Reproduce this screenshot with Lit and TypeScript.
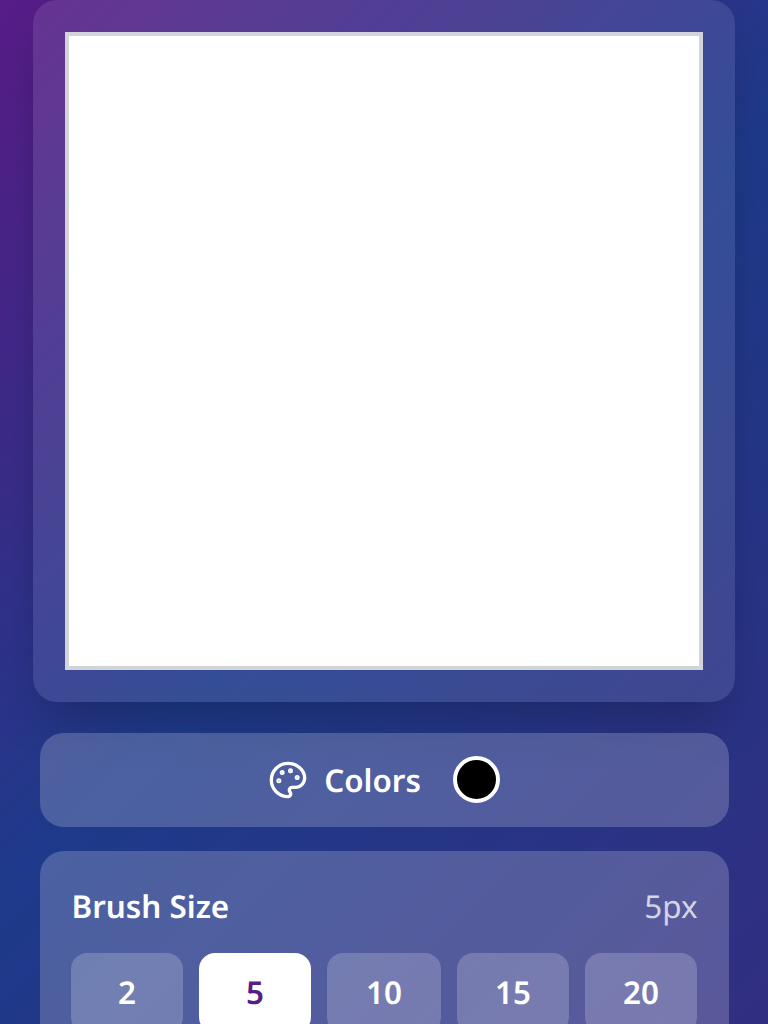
import { LitElement, html, css } from "lit";
import { customElement } from "lit/decorators.js";

@customElement("app-root")
export class AppRoot extends LitElement {
  static styles = css`
    :host {
      display: block;
      height: 1024px;
      overflow: hidden;
      font-family: "Noto Sans", sans-serif;
      text-rendering: geometricPrecision;
      color: #fff;
      background: linear-gradient(135deg, #581c87 0%, #1e3a8a 50%, #312e81 100%);
    }
    .page {
      display: flex;
      flex-direction: column;
      align-items: center;
    }
    .stage {
      box-sizing: border-box;
      width: 702px;
      height: 702px;
      margin-top: -0.5px;
      padding: 32px;
      border-radius: 24px;
      background: rgba(255, 255, 255, 0.1);
      box-shadow: 0 25px 50px -12px rgba(0, 0, 0, 0.25);
    }
    .canvas {
      box-sizing: border-box;
      width: 638px;
      height: 638px;
      background: #fff;
      border: 4px solid #d1d5db;
    }
    .colors {
      box-sizing: border-box;
      width: 689px;
      height: 94px;
      margin-top: 31px;
      border-radius: 24px;
      background: rgba(255, 255, 255, 0.2);
      display: flex;
      align-items: center;
      justify-content: center;
    }
    .colors svg {
      width: 40px;
      height: 40px;
      margin-right: 16px;
      fill: none;
      stroke: #fff;
      stroke-width: 2;
      stroke-linecap: round;
      stroke-linejoin: round;
    }
    .colors span {
      font-size: 31.4px;
      line-height: 45px;
      font-weight: 600;
      margin: 2px 32px 0 0;
    }
    .swatch {
      box-sizing: border-box;
      width: 47px;
      height: 47px;
      border-radius: 50%;
      background: #000;
      border: 4px solid #fff;
    }
    .brush {
      box-sizing: border-box;
      width: 689px;
      margin-top: 24px;
      padding: 32px 32px 32px 31px;
      border-radius: 24px;
      background: rgba(255, 255, 255, 0.2);
    }
    .head {
      display: flex;
      justify-content: space-between;
      align-items: center;
      margin: 0 -1px 24px 1px;
      padding-top: 1px;
      line-height: 45px;
    }
    .title {
      font-size: 31.4px;
      font-weight: 600;
    }
    .value {
      font-size: 31.4px;
      color: rgba(255, 255, 255, 0.75);
    }
    .sizes {
      display: grid;
      grid-template-columns: 112px 112px 114px 112px 112px;
      gap: 16px;
    }
    .sizes button {
      height: 80px;
      border: none;
      border-radius: 16px;
      background: rgba(255, 255, 255, 0.2);
      color: #fff;
      font: 600 31.4px "Noto Sans", sans-serif;
      text-rendering: geometricPrecision;
      padding: 0 0 0 1px;
    }
    .sizes button.on {
      background: #fff;
      color: #581c87;
    }
  `;

  render() {
    return html`
      <div class="page">
        <div class="stage"><div class="canvas"></div></div>
        <div class="colors">
          <svg viewBox="0 0 24 24" aria-hidden="true">
            <circle cx="13.5" cy="6.5" r=".5" fill="#fff" />
            <circle cx="17.5" cy="10.5" r=".5" fill="#fff" />
            <circle cx="8.5" cy="7.5" r=".5" fill="#fff" />
            <circle cx="6.5" cy="12.5" r=".5" fill="#fff" />
            <path d="M12 2C6.5 2 2 6.5 2 12s4.5 10 10 10c.926 0 1.648-.746 1.648-1.688 0-.437-.18-.835-.437-1.125-.29-.289-.438-.652-.438-1.125a1.64 1.64 0 0 1 1.668-1.668h1.996c3.051 0 5.555-2.503 5.555-5.554C21.965 6.012 17.461 2 12 2z" />
          </svg>
          <span>Colors</span>
          <div class="swatch"></div>
        </div>
        <div class="brush">
          <div class="head">
            <div class="title">Brush Size</div>
            <div class="value">5px</div>
          </div>
          <div class="sizes">
            ${[2, 5, 10, 15, 20].map(
              (n) => html`<button class=${n === 5 ? "on" : ""}>${n}</button>`
            )}
          </div>
        </div>
      </div>
    `;
  }
}
